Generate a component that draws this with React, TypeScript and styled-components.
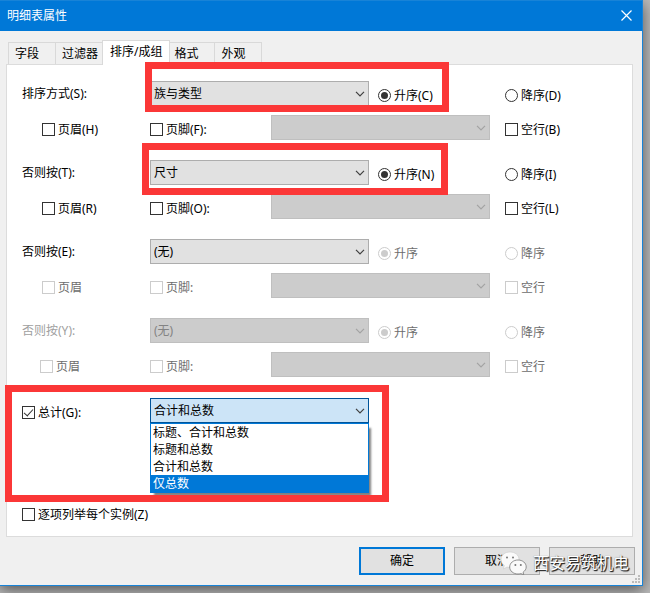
import React, { useId, useState } from "react";
import styled, { createGlobalStyle, css } from "styled-components";

const GlobalStyle = createGlobalStyle`
  *, *::before, *::after { box-sizing: border-box; }
  html, body { margin: 0; }
  body {
    background: #bababa;
    color: #000;
    font: 12px/16px "Noto Sans", "Noto Sans CJK SC", sans-serif;
  }
  button, input, select { font: inherit; color: inherit; margin: 0; }
`;

const Page = styled.main`
  overflow: hidden;
  padding: 0 7px 7px 0;
`;

const Dialog = styled.section`
  position: relative;
  background: #f0f0f0;
  border: solid #1883d7;
  border-width: 1px 1px 1px 0;
  box-shadow: 0 4px 14px rgba(0, 0, 0, 0.55);
`;

const TitleBar = styled.header`
  display: flex;
  align-items: center;
  justify-content: space-between;
  height: 30px;
  padding: 0 10px 0 7px;
  background: #0078d7;
  color: #fff;
`;

const Title = styled.h1`
  margin: 0;
  font-size: 12px;
  font-weight: 400;
`;

const CloseButton = styled.button`
  display: flex;
  padding: 0 0 2px;
  border: 0;
  background: none;
`;

const TabList = styled.div`
  display: flex;
  align-items: flex-end;
  height: 33px;
  padding-left: 8px;
`;

const Tab = styled.button<{ $active: boolean }>`
  min-width: 48px;
  height: 22px;
  margin-right: -1px;
  padding: 0 6px;
  border: 1px solid #d9d9d9;
  border-bottom: 0;
  background: #f0f0f0;
  text-align: left;
  ${(p) =>
    p.$active &&
    css`
      z-index: 1;
      height: 25px;
      margin: 0 -3px -1px -2px;
      padding: 0 7px 2px;
      background: #fff;
    `}
`;

const Panel = styled.div`
  margin: 0 9px 0 6px;
  padding: 16px 0 11px 15px;
  border: 1px solid #dcdcdc;
  background: #fff;
`;

const Groups = styled.div`
  display: grid;
  gap: 20px;
`;

const Group = styled.fieldset`
  display: grid;
  gap: 9px;
  min-width: 0;
  margin: 0;
  padding: 0;
  border: 0;
`;

const SortRow = styled.div`
  position: relative;
  display: grid;
  grid-template-columns: 128px minmax(0, 1fr) 136px 127px;
  align-items: center;
`;

const BandRow = styled.div`
  display: grid;
  grid-template-columns: 128px 121px minmax(0, 1fr) 142px;
  align-items: center;
`;

const FieldLabel = styled.label<{ $muted?: boolean }>`
  color: ${(p) => (p.$muted ? "#a0a0a0" : "#000")};
`;

const OptionCell = styled.div<{ $indent?: number }>`
  display: flex;
  align-items: center;
  gap: 3px;
  height: 25px;
  padding: 4px 0 0 ${(p) => p.$indent ?? 0}px;
`;

const OptionLabel = styled.label<{ $disabled?: boolean }>`
  color: ${(p) => (p.$disabled ? "#6d6d6d" : "#000")};
  white-space: nowrap;
`;

const OptionInput = styled.input`
  appearance: none;
  position: relative;
  flex: none;
  width: 13px;
  height: 13px;
  border: 1px solid #333;
  background: #fff;
  &:disabled { border-color: #ccc; }
  &[type="radio"] { border-radius: 50%; }
  &[type="radio"]:checked::after {
    content: "";
    position: absolute;
    inset: 2px;
    border-radius: 50%;
    background: #333;
  }
  &[type="radio"]:checked:disabled::after { background: #ccc; }
  &[type="checkbox"]:checked::after {
    content: "";
    position: absolute;
    left: 3px;
    top: 0;
    width: 5px;
    height: 9px;
    border: solid #333;
    border-width: 0 1px 1px 0;
    transform: rotate(42deg);
  }
`;

const ComboBox = styled.div`
  position: relative;
  min-width: 0;
`;

const ComboSelect = styled.select<{ $open?: boolean }>`
  appearance: none;
  display: block;
  width: 100%;
  height: 25px;
  padding: 0 20px 0 3px;
  border: 1px solid ${(p) => (p.$open ? "#005499" : "#adadad")};
  border-radius: 0;
  background: ${(p) => (p.$open ? "#cce4f7" : "#e1e1e1")};
  &:disabled {
    border-color: #bfbfbf;
    background: #ccc;
    color: #838383;
    opacity: 1;
  }
`;

const ComboArrow = styled.svg<{ $disabled?: boolean }>`
  position: absolute;
  right: 4px;
  top: 10px;
  fill: none;
  stroke: ${(p) => (p.$disabled ? "#a3a3a3" : "#404040")};
  stroke-width: 1.2;
  pointer-events: none;
`;

const OptionList = styled.ul`
  position: absolute;
  z-index: 2;
  top: 100%;
  left: 0;
  right: 0;
  margin: 0;
  padding: 0;
  border: 1px solid #0078d7;
  background: #fff;
  box-shadow: 3px 4px 2px -1px rgba(0, 0, 0, 0.5);
  list-style: none;
`;

const OptionItem = styled.li<{ $current: boolean }>`
  height: 17px;
  padding-left: 2px;
  line-height: 17px;
  background: ${(p) => (p.$current ? "#0078d7" : "#fff")};
  color: ${(p) => (p.$current ? "#fff" : "#000")};
`;

const Totals = styled.div`
  position: relative;
  display: grid;
  grid-template-columns: 128px minmax(0, 1fr) 263px;
  margin-top: 21px;
  margin-bottom: 77px;
`;

const Highlight = styled.div<{ $inset: string }>`
  position: absolute;
  z-index: 3;
  inset: ${(p) => p.$inset};
  border: 7px solid #fb3737;
  pointer-events: none;
`;

const Footer = styled.footer`
  display: flex;
  justify-content: flex-end;
  gap: 9px;
  padding: 10px 7px;
`;

const PushButton = styled.button<{ $primary?: boolean }>`
  width: 86px;
  height: 28px;
  padding: 0;
  border: ${(p) => (p.$primary ? "2px solid #0078d7" : "1px solid #adadad")};
  background: #e1e1e1;
`;

const Grip = styled.svg`
  position: absolute;
  right: 2px;
  bottom: 2px;
  fill: #bcbcbc;
`;

const Watermark = styled.div`
  position: absolute;
  right: 13px;
  bottom: 10px;
  display: flex;
  align-items: center;
  gap: 6px;
  color: #fff;
  font-size: 16px;
  line-height: 24px;
  text-shadow: 1px 1px 1px #222, 1px 1px 1px #555, 0 0 1px #777;
  white-space: nowrap;
  pointer-events: none;
`;

type ComboProps = { id?: string; label?: string; value?: string; disabled?: boolean; options?: string[] };

function Arrow({ disabled }: { disabled?: boolean }) {
  return (
    <ComboArrow $disabled={disabled} width="10" height="6" viewBox="0 0 10 6" aria-hidden="true">
      <path d="M1 .8 5 4.8 9 .8" />
    </ComboArrow>
  );
}

function Combo({ id, label, value = "", disabled, options = [value] }: ComboProps) {
  return (
    <ComboBox>
      <ComboSelect id={id} aria-label={label} defaultValue={value} disabled={disabled}>
        {options.map((o) => (
          <option key={o}>{o}</option>
        ))}
      </ComboSelect>
      <Arrow disabled={disabled} />
    </ComboBox>
  );
}

type OptionProps = {
  type: "radio" | "checkbox";
  text: string;
  name?: string;
  checked?: boolean;
  disabled?: boolean;
  indent?: number;
};

function Option({ type, text, name, checked, disabled, indent }: OptionProps) {
  const id = useId();
  return (
    <OptionCell $indent={indent}>
      <OptionInput id={id} type={type} name={name} defaultChecked={checked} disabled={disabled} />
      <OptionLabel htmlFor={id} $disabled={disabled}>{text}</OptionLabel>
    </OptionCell>
  );
}

type Level = {
  label: string;
  value: string;
  asc: string;
  desc: string;
  header: string;
  footer: string;
  blank: string;
  inactive?: boolean;
  locked?: boolean;
  indent: number;
  highlight?: string;
};

const fields = ["族与类型", "尺寸", "(无)"];

const levels: Level[] = [
  { label: "排序方式(S):", value: "族与类型", asc: "升序(C)", desc: "降序(D)", header: "页眉(H)", footer: "页脚(F):", blank: "空行(B)", indent: 20, highlight: "-19px 183px -6px 123px" },
  { label: "否则按(T):", value: "尺寸", asc: "升序(N)", desc: "降序(I)", header: "页眉(R)", footer: "页脚(O):", blank: "空行(L)", indent: 20, highlight: "-17px 184px -10px 120px" },
  { label: "否则按(E):", value: "(无)", asc: "升序", desc: "降序", header: "页眉", footer: "页脚:", blank: "空行", inactive: true, indent: 20 },
  { label: "否则按(Y):", value: "(无)", asc: "升序", desc: "降序", header: "页眉", footer: "页脚:", blank: "空行", inactive: true, locked: true, indent: 18 },
];

function SortLevel({ level }: { level: Level }) {
  const id = useId();
  const off = level.inactive;
  return (
    <Group>
      <SortRow>
        <FieldLabel htmlFor={id} $muted={level.locked}>{level.label}</FieldLabel>
        <Combo id={id} value={level.value} disabled={level.locked} options={fields} />
        <Option type="radio" name={id} text={level.asc} checked disabled={off} indent={9} />
        <Option type="radio" name={id} text={level.desc} disabled={off} />
        {level.highlight && <Highlight $inset={level.highlight} />}
      </SortRow>
      <BandRow>
        <Option type="checkbox" text={level.header} disabled={off} indent={level.indent} />
        <Option type="checkbox" text={level.footer} disabled={off} />
        <Combo label={level.footer} disabled />
        <Option type="checkbox" text={level.blank} disabled={off} indent={15} />
      </BandRow>
    </Group>
  );
}

const tabs = ["字段", "过滤器", "排序/成组", "格式", "外观"];
const totalOptions = ["标题、合计和总数", "标题和总数", "合计和总数", "仅总数"];

export default function App() {
  const [tab, setTab] = useState(2);
  const [current, setCurrent] = useState(3);
  return (
    <>
      <GlobalStyle />
      <Page>
        <Dialog role="dialog" aria-labelledby="dialog-title">
          <TitleBar>
            <Title id="dialog-title">明细表属性</Title>
            <CloseButton type="button" aria-label="关闭">
              <svg width="11" height="11" viewBox="0 0 11 11" fill="none" stroke="#fff" strokeWidth="1.2">
                <path d="M.5.5l10 10M10.5.5l-10 10" />
              </svg>
            </CloseButton>
          </TitleBar>
          <TabList role="tablist">
            {tabs.map((t, i) => (
              <Tab key={t} type="button" role="tab" aria-selected={i === tab} $active={i === tab} onClick={() => setTab(i)}>
                {t}
              </Tab>
            ))}
          </TabList>
          <Panel role="tabpanel">
            <Groups>
              {levels.map((l) => (
                <SortLevel key={l.label} level={l} />
              ))}
            </Groups>
            <Totals>
              <Option type="checkbox" text="总计(G):" checked />
              <ComboBox>
                <ComboSelect $open aria-label="总计" defaultValue="合计和总数">
                  {totalOptions.map((o) => (
                    <option key={o}>{o}</option>
                  ))}
                </ComboSelect>
                <Arrow />
                <OptionList role="listbox" aria-label="总计">
                  {totalOptions.map((o, i) => (
                    <OptionItem key={o} role="option" aria-selected={i === current} $current={i === current} onMouseEnter={() => setCurrent(i)}>
                      {o}
                    </OptionItem>
                  ))}
                </OptionList>
              </ComboBox>
              <Highlight $inset="-13px 243px -79px -17px" />
            </Totals>
            <Option type="checkbox" text="逐项列举每个实例(Z)" />
          </Panel>
          <Footer>
            <PushButton type="button" $primary>确定</PushButton>
            <PushButton type="button">取消</PushButton>
            <PushButton type="button">帮助</PushButton>
          </Footer>
          <Grip width="8" height="8" viewBox="0 0 8 8" aria-hidden="true">
            <path d="M6 0h2v2H6zM3 3h2v2H3zM6 3h2v2H6zM0 6h2v2H0zM3 6h2v2H3zM6 6h2v2H6z" />
          </Grip>
          <Watermark>
            <svg width="27" height="24" viewBox="0 0 27 24" aria-hidden="true">
              <path d="M10 1C4.700 1 1 4.200 1 8.500c0 2.500 1.200 4.600 3.300 6L3.500 18l3.500-2c1 .3 2 .4 3 .4 5 0 9-3.400 9-7.900S15 1 10 1z" fill="#fafafa" stroke="#c4c4c4" strokeWidth=".5" />
              <path d="M18 9c-4.600 0-8.300 3-8.300 7s3.700 7 8.300 7c1 0 2-.2 2.900-.4l2.900 1.200-.7-2.600c1.900-1.300 3.100-3.100 3.100-5.200 0-4-3.600-7-8.200-7z" fill="#fafafa" stroke="#777" strokeWidth=".8" />
              <g fill="#777">
                <circle cx="7" cy="6.500" r="1" />
                <circle cx="13" cy="6.500" r="1" />
                <circle cx="15.400" cy="14" r="1" />
                <circle cx="20.800" cy="14" r="1" />
              </g>
            </svg>
            <span>西安易筑机电</span>
          </Watermark>
        </Dialog>
      </Page>
    </>
  );
}
